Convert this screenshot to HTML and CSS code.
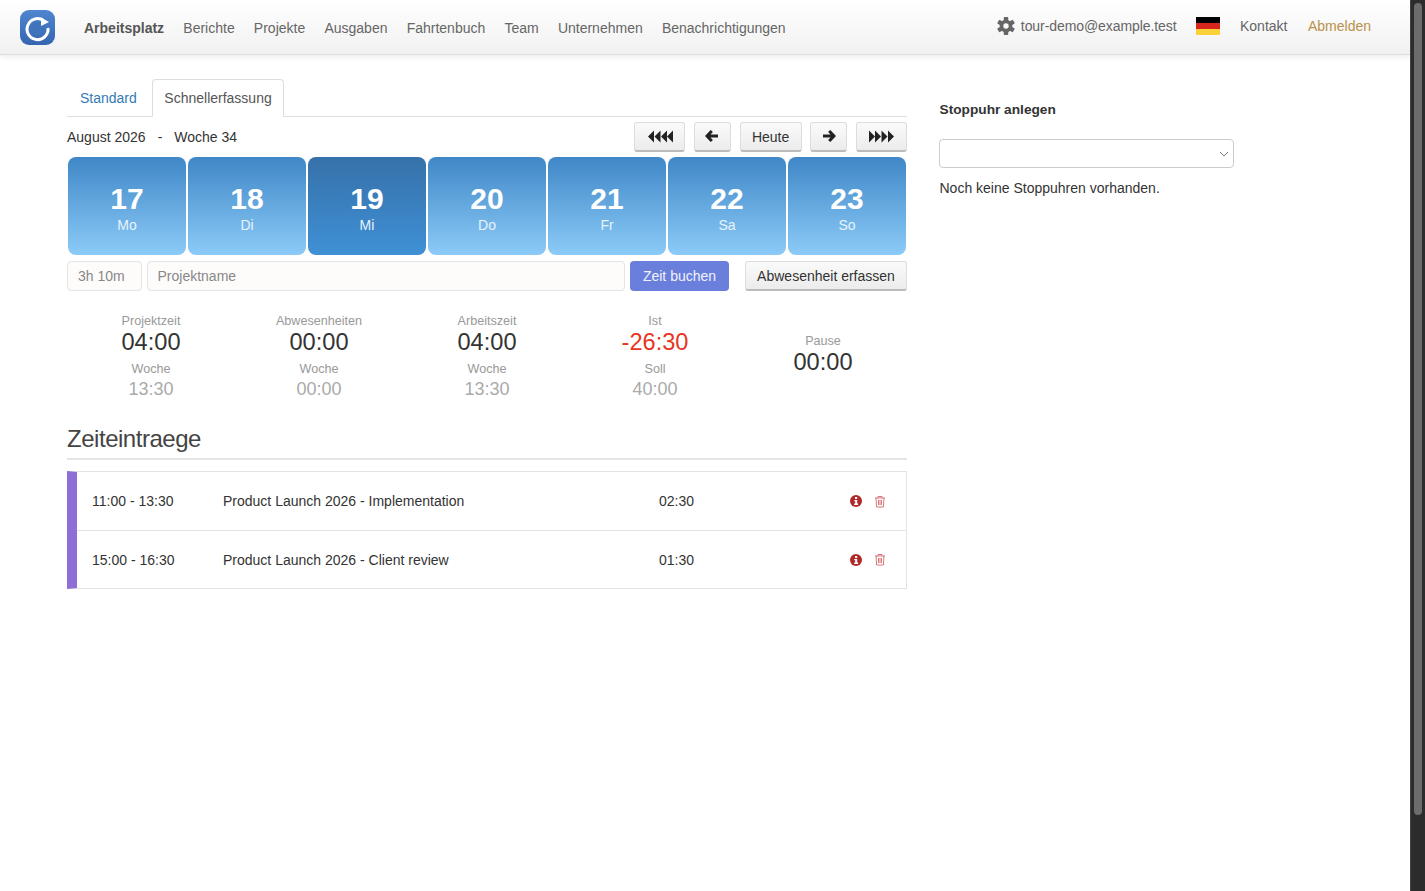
FILE: index.html
```html
<!DOCTYPE html>
<html lang="de">
<head>
    <meta charset="UTF-8">
    <title>Arbeitsplatz</title>
    <link rel="stylesheet" href="styles.css">
</head>
<body>
<div class="shell">
    <div class="page">
        <nav class="navbar">
            <svg class="logo" viewBox="0 0 35 35">
                <defs>
                    <linearGradient id="logoBg" x1="0" y1="0" x2="0" y2="1">
                        <stop offset="0" stop-color="#4f86cf"/>
                        <stop offset="1" stop-color="#3565b0"/>
                    </linearGradient>
                </defs>
                <rect width="35" height="35" rx="9" fill="url(#logoBg)"/>
                <circle cx="17.5" cy="18.5" r="7" fill="#3f74bd"/>
                <path d="M23.5 10.5 A10.5 10.5 0 1 0 28 18" fill="none" stroke="#fff" stroke-width="3"/>
                <polygon points="21,7.5 29,12 21,16" fill="#fff"/>
            </svg>
            <a class="nav-link active">Arbeitsplatz</a>
            <a class="nav-link">Berichte</a>
            <a class="nav-link">Projekte</a>
            <a class="nav-link">Ausgaben</a>
            <a class="nav-link">Fahrtenbuch</a>
            <a class="nav-link">Team</a>
            <a class="nav-link">Unternehmen</a>
            <a class="nav-link">Benachrichtigungen</a>
            <div class="nav-right">
                <svg class="gear" viewBox="0 0 24 24">
                    <g fill="#666">
                        <rect x="9" y="0" width="6" height="24" rx="1"/>
                        <rect x="9" y="0" width="6" height="24" rx="1" transform="rotate(60 12 12)"/>
                        <rect x="9" y="0" width="6" height="24" rx="1" transform="rotate(120 12 12)"/>
                        <circle cx="12" cy="12" r="8.500"/>
                    </g>
                    <circle cx="12" cy="12" r="3.600" fill="#f8f8f8"/>
                </svg>
                <a class="nav-link user">tour-demo@example.test</a>
                <div class="flag"><span class="black"></span><span class="red"></span><span class="gold"></span></div>
                <a class="nav-link contact">Kontakt</a>
                <a class="nav-link logout">Abmelden</a>
            </div>
        </nav>

        <div class="content">
            <main class="left">
                <div class="tabs">
                    <a class="tab">Standard</a>
                    <a class="tab current">Schnellerfassung</a>
                </div>

                <div class="week-row">
                    <div class="week-label"><span>August 2026</span><span class="dash">-</span><span>Woche 34</span></div>
                    <div class="week-btns">
                        <button class="btn btn-wide"><svg class="ico-multi" viewBox="0 0 26 13"><path d="M7 .5v12L1 6.500zM13.500 .5v12l-6-6zM20 .5v12l-6-6zM26 .5v12l-6-6z"/></svg></button>
                        <button class="btn btn-arrow"><svg class="ico" viewBox="0 0 14 12"><path d="M6.800 1 2 6l4.800 5M2.500 6H13" fill="none" stroke="#222" stroke-width="3"/></svg></button>
                        <button class="btn btn-today">Heute</button>
                        <button class="btn btn-arrow"><svg class="ico" viewBox="0 0 14 12"><path d="M7.200 1 12 6l-4.800 5M11.500 6H1" fill="none" stroke="#222" stroke-width="3"/></svg></button>
                        <button class="btn btn-wide"><svg class="ico-multi" viewBox="0 0 26 13"><path d="M0 .5v12l6-6zM6 .5v12l6-6zM12.500 .5v12l6-6zM19 .5v12l6-6z"/></svg></button>
                    </div>
                </div>

                <div class="days">
                    <div class="day"><div class="day-num">17</div><div class="day-name">Mo</div></div>
                    <div class="day"><div class="day-num">18</div><div class="day-name">Di</div></div>
                    <div class="day selected"><div class="day-num">19</div><div class="day-name">Mi</div></div>
                    <div class="day"><div class="day-num">20</div><div class="day-name">Do</div></div>
                    <div class="day"><div class="day-num">21</div><div class="day-name">Fr</div></div>
                    <div class="day"><div class="day-num">22</div><div class="day-name">Sa</div></div>
                    <div class="day"><div class="day-num">23</div><div class="day-name">So</div></div>
                </div>

                <div class="quick-row">
                    <input class="field field-time" type="text" placeholder="3h 10m">
                    <input class="field field-project" type="text" placeholder="Projektname">
                    <button class="book-btn">Zeit buchen</button>
                    <button class="btn absence-btn">Abwesenheit erfassen</button>
                </div>

                <div class="stats">
                    <div class="stat">
                        <div class="stat-label">Projektzeit</div>
                        <div class="stat-value">04:00</div>
                        <div class="stat-label sub">Woche</div>
                        <div class="stat-sub">13:30</div>
                    </div>
                    <div class="stat">
                        <div class="stat-label">Abwesenheiten</div>
                        <div class="stat-value">00:00</div>
                        <div class="stat-label sub">Woche</div>
                        <div class="stat-sub">00:00</div>
                    </div>
                    <div class="stat">
                        <div class="stat-label">Arbeitszeit</div>
                        <div class="stat-value">04:00</div>
                        <div class="stat-label sub">Woche</div>
                        <div class="stat-sub">13:30</div>
                    </div>
                    <div class="stat">
                        <div class="stat-label">Ist</div>
                        <div class="stat-value negative">-26:30</div>
                        <div class="stat-label sub">Soll</div>
                        <div class="stat-sub">40:00</div>
                    </div>
                    <div class="stat stat-pause">
                        <div class="stat-label">Pause</div>
                        <div class="stat-value">00:00</div>
                    </div>
                </div>

                <h2 class="section-title">Zeiteintraege</h2>

                <div class="entries">
                    <div class="entry">
                        <div class="entry-time">11:00 - 13:30</div>
                        <div class="entry-name">Product Launch 2026 - Implementation</div>
                        <div class="entry-dur">02:30</div>
                        <div class="entry-actions">
                            <svg class="info" viewBox="0 0 12 12"><circle cx="6" cy="6" r="6" fill="#b02a2a"/><rect x="5" y="2" width="2.200" height="2" fill="#fff"/><path d="M4.300 5h2.900v3.600h.9V10H4.200V8.600h1V6.300h-.9z" fill="#fff"/></svg>
                            <svg class="trash" viewBox="0 0 12 13"><path d="M1 3h10M4 3V1.500h4V3M2 3l.6 9h6.800L10 3M4.500 5v5M6 5v5M7.500 5v5" fill="none" stroke="#d9777a" stroke-width="1"/></svg>
                        </div>
                    </div>
                    <div class="entry">
                        <div class="entry-time">15:00 - 16:30</div>
                        <div class="entry-name">Product Launch 2026 - Client review</div>
                        <div class="entry-dur">01:30</div>
                        <div class="entry-actions">
                            <svg class="info" viewBox="0 0 12 12"><circle cx="6" cy="6" r="6" fill="#b02a2a"/><rect x="5" y="2" width="2.200" height="2" fill="#fff"/><path d="M4.300 5h2.900v3.600h.9V10H4.200V8.600h1V6.300h-.9z" fill="#fff"/></svg>
                            <svg class="trash" viewBox="0 0 12 13"><path d="M1 3h10M4 3V1.500h4V3M2 3l.6 9h6.800L10 3M4.500 5v5M6 5v5M7.500 5v5" fill="none" stroke="#d9777a" stroke-width="1"/></svg>
                        </div>
                    </div>
                </div>
            </main>

            <aside class="right">
                <h3 class="side-title">Stoppuhr anlegen</h3>
                <div class="select-box">
                    <svg class="chevron" viewBox="0 0 10 6"><path d="M1 1l4 4 4-4" fill="none" stroke="#777" stroke-width="1"/></svg>
                </div>
                <p class="side-note">Noch keine Stoppuhren vorhanden.</p>
            </aside>
        </div>
    </div>
    <div class="scrollbar"><div class="thumb"></div></div>
</div>
</body>
</html>
```

FILE: styles.css
```css
* { box-sizing: border-box; }
html, body { margin: 0; padding: 0; height: 100%; overflow: hidden; }
body { font-family: "Liberation Sans", Arial, sans-serif; font-size: 14px; color: #333; background: #fff; }

.shell { display: flex; height: 891px; }
.page { flex: 1; min-width: 0; }
.scrollbar { width: 15px; background: #2c2c2c; border-left: 1px solid #444; padding: 3px 3px 0 3px; }
.thumb { height: 812px; background: #6c6c6c; border-radius: 4px; }

.navbar { display: flex; align-items: center; height: 55px; padding-left: 20px; padding-right: 39px; background: linear-gradient(to bottom, #ffffff, #f1f1f1); border-bottom: 1px solid #ddd; box-shadow: 0 2px 6px rgba(0,0,0,0.08); }
.logo { width: 35px; height: 35px; margin-right: 29px; flex: none; }
.nav-link { color: #666; margin-right: 19.200px; padding-top: 2px; white-space: nowrap; }
.nav-link.active { font-weight: bold; color: #555; }
.nav-right { display: flex; align-items: center; margin-left: auto; margin-top: -3px; }
.nav-right .nav-link { padding-top: 0; }
.nav-right .nav-link:last-child { margin-right: 0; }
.gear { width: 18px; height: 18px; margin-right: 6px; }
.nav-right .user { margin-right: 19.500px; letter-spacing: -0.080px; }
.flag { width: 24px; height: 18px; margin-right: 20px; display: flex; flex-direction: column; }
.flag span { flex: 1; }
.flag .black { background: #000; }
.flag .red { background: #d8261c; }
.flag .gold { background: #fcd13a; }
.nav-right .contact { margin-right: 20.500px; }
.logout { color: #b8924a; }

.content { display: flex; padding-left: 67px; }
.left { width: 840px; padding-top: 24px; }
.right { width: 295px; margin-left: 32px; padding-top: 46px; }

.tabs { display: flex; height: 38px; border-bottom: 1px solid #ddd; }
.tab { padding: 11px 13px 0 13px; height: 38px; color: #337ab7; }
.tab.current { color: #555; background: #fff; border: 1px solid #ddd; border-bottom-color: #fff; border-radius: 4px 4px 0 0; padding: 10px 11.500px 0 11.500px; width: 132px; margin-left: 2px; }

.week-row { display: flex; justify-content: space-between; align-items: center; height: 31px; margin-top: 4px; }
.week-label { display: flex; color: #333; }
.dash { margin: 0 12px; }
.week-btns { display: flex; gap: 8.700px; }
.btn { font-family: inherit; font-size: 14px; color: #333; height: 30px; padding: 1px 12px 0 12px; background: linear-gradient(to bottom, #fafafa, #ececec); border: 1px solid #ddd; border-bottom: 2px solid #bbb; border-radius: 3px; }
.btn-wide { width: 51px; padding: 0; }
.btn-arrow { width: 37px; padding: 0; }
.btn-today { width: 62px; padding: 1px 0 0 0; }
.ico { width: 14px; height: 12px; display: block; margin: 0 auto; }
.ico-multi { width: 26px; height: 13px; display: block; margin: 0 auto; fill: #222; }

.days { display: flex; gap: 2px; margin-top: 5px; padding: 0 1px; }
.day { flex: 1; height: 98px; text-align: center; color: #fff; border-radius: 8px; background: linear-gradient(to bottom, #3f87c7, #8ccbf8); padding-top: 26px; }
.day.selected { background: linear-gradient(to bottom, #3671a9, #3f90d6); }
.day-num { font-size: 30px; font-weight: bold; line-height: 32px; }
.day-name { font-size: 14px; line-height: 20px; color: #e8f3fc; }

.quick-row { display: flex; align-items: center; margin-top: 6px; }
.field { font-family: inherit; font-size: 14px; height: 30px; padding: 0 10px; border: 1px solid #e3e3e3; border-radius: 4px; background: #fdfcfb; outline: none; }
.field::placeholder { color: #888; opacity: 1; }
.field-time { width: 75px; margin-right: 4.500px; }
.field-project { width: 478.500px; margin-right: 5px; }
.book-btn { font-family: inherit; font-size: 14px; width: 99px; height: 30px; color: #f1f3fc; background: #6a7fdb; border: none; border-radius: 4px; margin-right: 16px; }
.absence-btn { width: 162px; padding: 0; }

.stats { display: flex; margin-top: 22px; }
.stat { width: 168px; text-align: center; }
.stat-label { font-size: 12.600px; line-height: 16px; color: #999; }
.stat-label.sub { margin-top: 6px; }
.stat-value { font-size: 23.600px; line-height: 26px; color: #333; }
.stat-value.negative { color: #e8351f; }
.stat-sub { font-size: 18px; line-height: 24px; color: #aaa; }
.stat-pause { padding-top: 20px; }

.section-title { font-size: 24px; font-weight: normal; line-height: 30px; color: #444; margin: 23px 0 0 0; padding-bottom: 4px; border-bottom: 2px solid #e5e5e5; letter-spacing: -0.470px; }

.entries { margin-top: 11px; border: 1px solid #e3e3e3; border-left: 10px solid #8f6fd6; }
.entry { display: flex; align-items: center; height: 58px; font-size: 14px; color: #333; }
.entry + .entry { border-top: 1px solid #e3e3e3; }
.entry-time { width: 146px; padding-left: 15px; flex: none; }
.entry-name { width: 436px; flex: none; }
.entry-dur { width: 191px; flex: none; }
.entry-actions { display: flex; align-items: center; gap: 12px; }
.info { width: 12px; height: 12px; }
.trash { width: 12px; height: 13px; }

.side-title { font-size: 13.700px; font-weight: bold; line-height: 18px; margin: 0; color: #333; padding-left: 0.500px; }
.select-box { position: relative; height: 29px; margin-top: 20px; border: 1px solid #ccc; border-radius: 4px; background: #fff; }
.chevron { position: absolute; right: 4px; top: 11px; width: 10px; height: 6px; }
.side-note { margin: 11px 0 0 0; line-height: 18px; color: #333; padding-left: 0.500px; }
```
